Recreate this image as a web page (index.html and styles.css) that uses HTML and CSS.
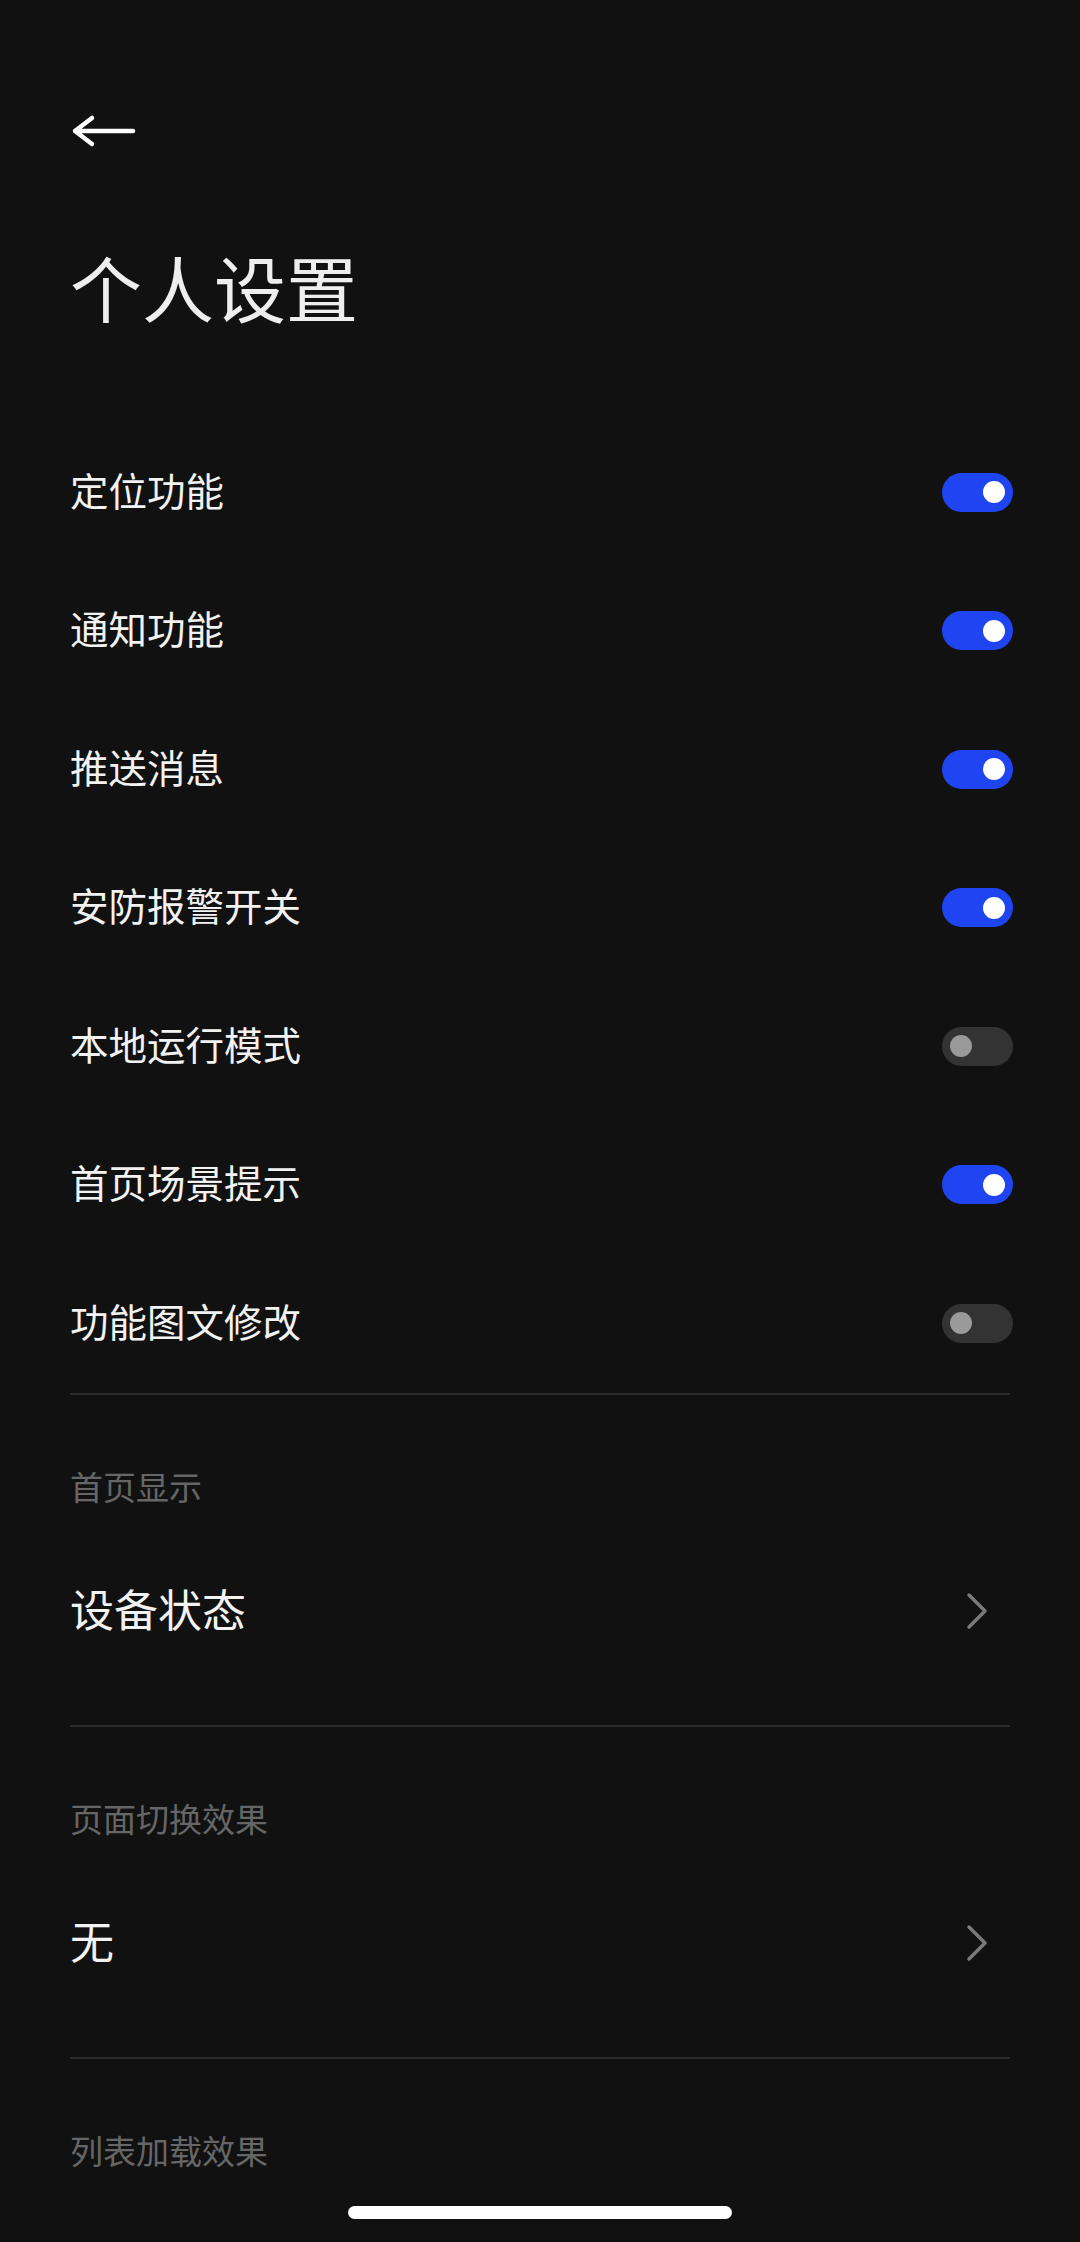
FILE: index.html
```html
<!DOCTYPE html>
<html lang="zh-CN">
<head>
  <meta charset="UTF-8">
  <meta name="viewport" content="width=device-width, initial-scale=1.0">
  <title>个人设置</title>
  <link rel="stylesheet" href="styles.css">
</head>
<body>
  <div class="page">
    <div class="nav">
      <svg class="back" width="66" height="34" viewBox="0 0 66 34">
        <path d="M5 17 H63 M22 4 L5 17 L22 30" fill="none" stroke="#fff" stroke-width="4.5" stroke-linecap="round" stroke-linejoin="round"/>
      </svg>
    </div>
    <h1 class="title">个人设置</h1>

    <div class="switch-list">
      <div class="row"><span class="label">定位功能</span><span class="switch on"></span></div>
      <div class="row"><span class="label">通知功能</span><span class="switch on"></span></div>
      <div class="row"><span class="label">推送消息</span><span class="switch on"></span></div>
      <div class="row"><span class="label">安防报警开关</span><span class="switch on"></span></div>
      <div class="row"><span class="label">本地运行模式</span><span class="switch"></span></div>
      <div class="row"><span class="label">首页场景提示</span><span class="switch on"></span></div>
      <div class="row"><span class="label">功能图文修改</span><span class="switch"></span></div>
    </div>

    <div class="group">
      <div class="group-label">首页显示</div>
      <div class="group-item">
        <span class="label">设备状态</span>
        <svg class="chevron" width="24" height="40" viewBox="0 0 24 40"><path d="M4 4 L20 20 L4 36" fill="none" stroke="#7a7a7a" stroke-width="3.5" stroke-linecap="round" stroke-linejoin="round"/></svg>
      </div>
    </div>

    <div class="group">
      <div class="group-label">页面切换效果</div>
      <div class="group-item">
        <span class="label">无</span>
        <svg class="chevron" width="24" height="40" viewBox="0 0 24 40"><path d="M4 4 L20 20 L4 36" fill="none" stroke="#7a7a7a" stroke-width="3.5" stroke-linecap="round" stroke-linejoin="round"/></svg>
      </div>
    </div>

    <div class="group last">
      <div class="group-label">列表加载效果</div>
    </div>
  </div>
  <div class="home-bar"></div>
</body>
</html>
```

FILE: styles.css
```css
html, body {
  margin: 0;
  background: #111111;
}
body {
  font-family: "Noto Sans CJK SC", "Noto Sans", sans-serif;
  color: #f2f2f2;
  height: 2242px;
  overflow: hidden;
}
.page {
  padding: 0 67px 0 70px;
}
.nav {
  padding-top: 114px;
  height: 34px;
}
.back {
  display: block;
}
.title {
  margin: 88px 0 0;
  height: 100px;
  line-height: 100px;
  font-size: 72px;
  font-weight: 400;
  color: #eeeeee;
}
.switch-list {
  margin-top: 87px;
  border-bottom: 2px solid #2b2b2b;
  margin-right: 3px;
}
.row {
  height: 138.5px;
  display: flex;
  align-items: center;
  justify-content: space-between;
  font-size: 38.5px;
  margin-right: -3px;
}
/* nudge CJK glyphs up so their ink sits on the row centre */
.label {
  padding-bottom: 7px;
}
.switch {
  position: relative;
  width: 71px;
  height: 39px;
  border-radius: 20px;
  background: #333333;
}
.switch::after {
  content: "";
  position: absolute;
  top: 8.5px;
  left: 8px;
  width: 22px;
  height: 22px;
  border-radius: 50%;
  background: #9a9a9a;
}
.switch.on {
  background: #1f45f2;
}
.switch.on::after {
  left: auto;
  right: 8px;
  background: #ffffff;
}
.group {
  padding-top: 61px;
  padding-bottom: 84px;
  border-bottom: 2px solid #2b2b2b;
  margin-right: 3px;
}
.group.last {
  border-bottom: none;
}
.group-label {
  height: 60px;
  line-height: 60px;
  font-size: 33px;
  color: #666666;
}
.group-item {
  margin-top: 65px;
  height: 60px;
  display: flex;
  align-items: center;
  justify-content: space-between;
  font-size: 44px;
}
.group-item .label {
  padding-bottom: 6px;
}
.chevron {
  margin-right: 21px;
}
.home-bar {
  position: fixed;
  left: 348px;
  bottom: 23px;
  width: 384px;
  height: 13px;
  border-radius: 7px;
  background: #ffffff;
}
```
